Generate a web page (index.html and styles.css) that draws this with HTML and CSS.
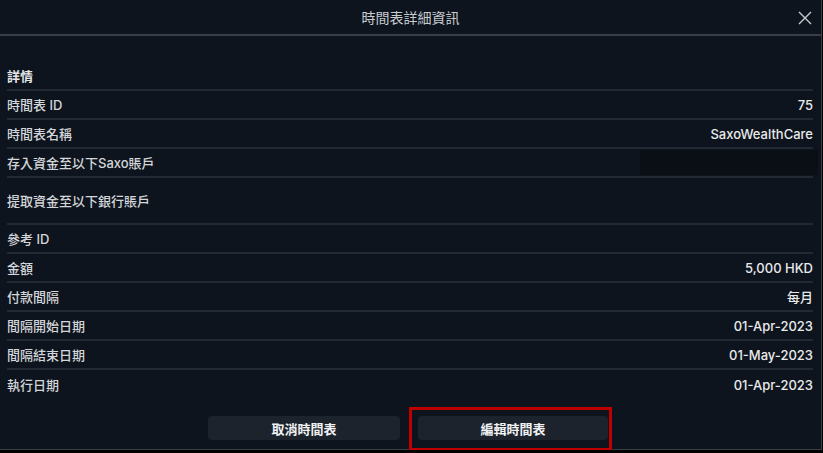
FILE: index.html
```html
<!DOCTYPE html>
<html lang="zh-Hant">
<head>
  <meta charset="UTF-8" />
  <meta name="viewport" content="width=device-width, initial-scale=1.0"/>
  <title>時間表詳細資訊</title>
  <link rel="stylesheet" href="styles.css">
</head>
<body>

  <div class="modal">
    <div class="modal-header">
      <span class="modal-title">時間表詳細資訊</span>
      <button class="close-btn" aria-label="關閉">
        <svg width="14" height="14" viewBox="0 0 14 14">
          <path d="M1 1 L13 13 M13 1 L1 13" stroke="#c9cdd1" stroke-width="1.4" fill="none"/>
        </svg>
      </button>
    </div>

    <div class="modal-body">
      <div class="row section">詳情</div>
      <div class="row"><span class="label">時間表 ID</span><span class="value">75</span></div>
      <div class="row"><span class="label">時間表名稱</span><span class="value">SaxoWealthCare</span></div>
      <div class="row"><span class="label">存入資金至以下Saxo賬戶</span><span class="masked"></span></div>
      <div class="row tall"><span class="label">提取資金至以下銀行賬戶</span></div>
      <div class="row"><span class="label">參考 ID</span></div>
      <div class="row"><span class="label">金額</span><span class="value">5,000 HKD</span></div>
      <div class="row"><span class="label">付款間隔</span><span class="value">每月</span></div>
      <div class="row"><span class="label">間隔開始日期</span><span class="value">01-Apr-2023</span></div>
      <div class="row"><span class="label">間隔結束日期</span><span class="value">01-May-2023</span></div>
      <div class="row last"><span class="label">執行日期</span><span class="value">01-Apr-2023</span></div>

      <div class="actions">
        <button class="btn">取消時間表</button>
        <button class="btn highlighted">編輯時間表<span class="mark"></span></button>
      </div>
    </div>
  </div>

</body>
</html>
```

FILE: styles.css
```css
body {
  margin: 0;
  background: #000;
  font-family: Inter, "Noto Sans CJK TC", sans-serif;
  color: #dfe2e5;
}

.modal {
  width: 821px;
  height: 449px;
  background: #0e141d;
  border-right: 1px solid #3a3f46;
  border-bottom: 1px solid #3a3f46;
}

.modal-header {
  height: 34px;
  border-bottom: 2px solid #3a3f46;
  display: flex;
  align-items: center;
  justify-content: center;
  position: relative;
}

.modal-title {
  font-size: 14px;
  color: #c7cbcf;
}

.close-btn {
  position: absolute;
  right: 9px;
  top: 11px;
  width: 14px;
  height: 14px;
  padding: 0;
  border: none;
  background: none;
  display: flex;
}

.modal-body {
  padding: 26px 8px 0 7px;
}

.row {
  height: 27px;
  border-bottom: 2px solid #232932;
  display: flex;
  align-items: center;
  justify-content: space-between;
  font-size: 13px;
  font-weight: 500;
}

.section {
  font-weight: 700;
  color: #e4e6e8;
}

.tall {
  height: 45px;
}

.last {
  border-bottom: none;
  height: 29px;
}

.label {
  color: #d3d6da;
}

.value {
  color: #e8eaec;
  font-weight: 500;
}

.masked {
  width: 178px;
  height: 25px;
  margin-right: -5px;
  background: #0a0f16;
}

.actions {
  display: flex;
  justify-content: center;
  gap: 18px;
  margin-top: 17px;
  padding-right: 4px;
}

.btn {
  width: 192px;
  height: 24px;
  border: none;
  border-radius: 4px;
  background: #1c232c;
  color: #f0f1f2;
  font-family: Inter, "Noto Sans CJK TC", sans-serif;
  font-size: 13px;
  font-weight: 700;
  padding: 0;
}

.highlighted {
  position: relative;
  width: 190px;
}

.mark {
  position: absolute;
  left: -9px;
  right: -4px;
  top: -9px;
  bottom: -11px;
  border: 3px solid #c00000;
}
```
